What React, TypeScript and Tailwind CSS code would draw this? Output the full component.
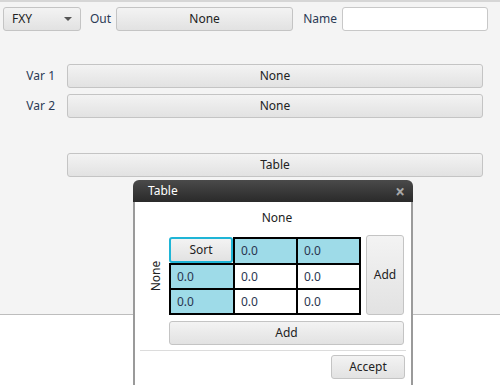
import React from "react";

const btn =
  "flex items-center justify-center border border-[#c4c4c4] rounded-[3px] bg-gradient-to-b from-[#f3f3f3] to-[#e2e2e2] text-[#222]";

const Cell: React.FC<{ blue?: boolean }> = ({ blue }) => (
  <div className={`flex items-center pl-[6px] ${blue ? "bg-[#9edbe8]" : "bg-white"} text-[#2a3550]`}>
    0.0
  </div>
);

export default function App() {
  return (
    <div
      className="relative w-[500px] h-[385px] overflow-hidden bg-white text-[12px] text-[#222]"
      style={{ fontFamily: "'Noto Sans', 'Liberation Sans', sans-serif" }}
    >
      {/* main window */}
      <div className="h-[315px] bg-[#f4f4f4] border-t-2 border-[#d6d6d6] border-b border-b-[#bdbdbd]">
        <div className="flex items-center h-[24px] mt-[5px] pl-[3px]">
          <div className={`${btn} w-[78px] h-[24px] !justify-between px-[8px]`}>
            <span>FXY</span>
            <span className="w-0 h-0 border-x-[4px] border-x-transparent border-t-[4px] border-t-[#555]" />
          </div>
          <span className="ml-[9px] text-[#2b3a55]">Out</span>
          <div className={`${btn} ml-[5px] w-[177px] h-[24px]`}>None</div>
          <span className="ml-[10px] text-[#2b3a55]">Name</span>
          <div className="ml-[5px] w-[146px] h-[24px] bg-white border border-[#c8c8c8] rounded-[3px]" />
        </div>

        <div className="flex flex-col gap-[6px] mt-[33px]">
          <div className="flex items-center">
            <span className="w-[55px] text-right text-[#2b3a55]">Var 1</span>
            <div className={`${btn} ml-[12px] w-[416px] h-[24px]`}>None</div>
          </div>
          <div className="flex items-center">
            <span className="w-[55px] text-right text-[#2b3a55]">Var 2</span>
            <div className={`${btn} ml-[12px] w-[416px] h-[24px]`}>None</div>
          </div>
          <div className="flex items-center mt-[29px]">
            <div className={`${btn} ml-[67px] w-[416px] h-[24px]`}>Table</div>
          </div>
        </div>
      </div>

      {/* dialog window */}
      <div className="absolute left-[133px] top-[180px] w-[280px] h-[210px] flex flex-col">
        <div className="h-[22px] rounded-t-[6px] bg-gradient-to-b from-[#4a4a4a] to-[#2a2a2a] flex items-center justify-between pl-[15px] pr-[8px]">
          <span className="text-white text-[12px]">Table</span>
          <span className="text-[#a8a8a8] font-bold text-[17px] leading-none">×</span>
        </div>
        <div className="flex-1 bg-white border-x-2 border-[#9a9a9a] flex flex-col">
          <div className="text-center mt-[7px] h-[18px] pl-[8px]">None</div>

          <div className="flex mt-[10px]">
            <div className="w-[34px] flex items-center justify-center">
              <span className="-rotate-90 whitespace-nowrap ml-[8px]">None</span>
            </div>
            <div className="grid grid-cols-[62px_61px_61px] grid-rows-[24px_23px_23px] gap-[2px] p-[2px] bg-black">
              <div className="-ml-[2px] -mt-[2px] bg-white flex">
                <div className="w-[64px] h-[26px] rounded-[3px] border-2 border-[#1fb5d6] bg-gradient-to-b from-[#f3f3f3] to-[#e2e2e2] flex items-center justify-center">
                  Sort
                </div>
              </div>
              <Cell blue />
              <Cell blue />
              <Cell blue />
              <Cell />
              <Cell />
              <Cell blue />
              <Cell />
              <Cell />
            </div>
            <div className={`${btn} ml-[5px] -mt-[2px] w-[38px] h-[80px]`}>Add</div>
          </div>

          <div className={`${btn} ml-[34px] mt-[6px] w-[235px] h-[24px]`}>Add</div>
          <div className="ml-[5px] mt-[5px] w-[266px] border-t border-[#dcdcdc]" />
          <div className="flex justify-end pr-[6px] mt-[4px]">
            <div className={`${btn} w-[74px] h-[24px]`}>Accept</div>
          </div>
        </div>
      </div>
    </div>
  );
}
